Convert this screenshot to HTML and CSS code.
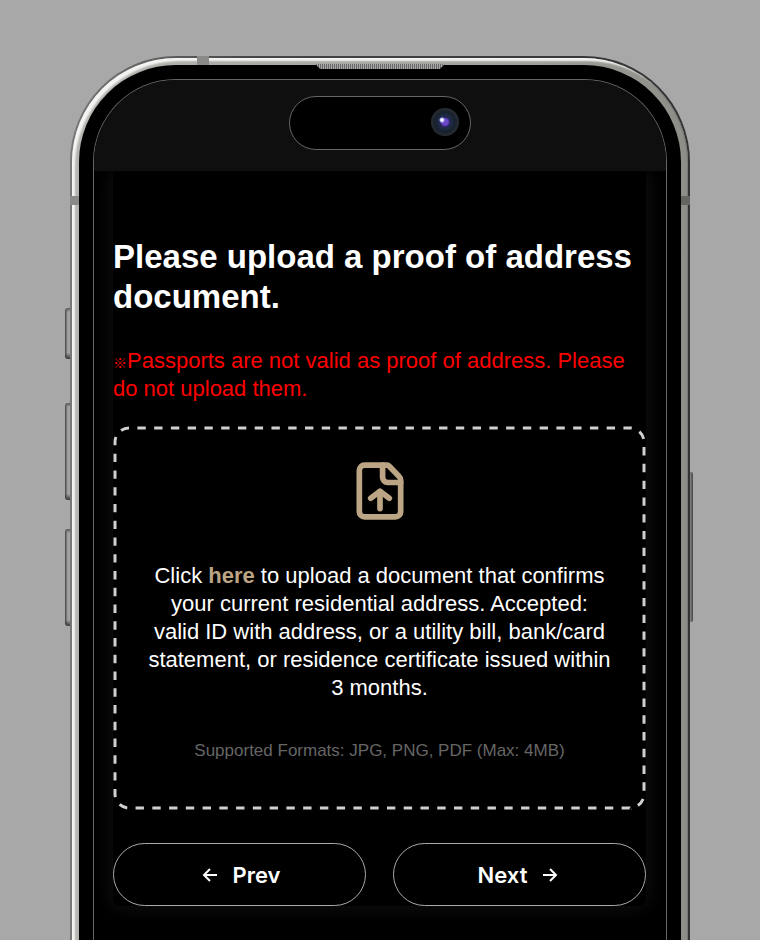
FILE: index.html
```html
<!DOCTYPE html>
<html lang="en">

<head>
    <meta charset="UTF-8">
    <meta name="viewport" content="width=device-width, initial-scale=1.0">
    <title>Upload proof of address</title>
    <link rel="stylesheet" href="styles.css">
</head>

<body>
    <div class="phone">
        <span class="side_btn action"></span>
        <span class="side_btn vol_up"></span>
        <span class="side_btn vol_down"></span>
        <span class="side_btn power"></span>
        <div class="metal">
            <span class="band band_top"></span>
            <span class="band band_left"></span>
            <span class="band band_right"></span>
            <div class="bezel">
                <span class="speaker"></span>
                <div class="screen">
                    <div class="status">
                        <div class="island">
                            <span class="camera"></span>
                        </div>
                    </div>
                    <main class="panel">
                        <h1>Please upload a proof of address document.</h1>
                        <p class="warning"><span class="mark">※</span>Passports are not valid as proof of address. Please do not upload them.</p>
                        <div class="dropzone">
                            <svg class="dashes" aria-hidden="true">
                                <rect pathLength="214" />
                            </svg>
                            <svg class="file_icon" viewBox="0 0 24 24" aria-hidden="true">
                                <path d="M6 2h8.6a1.6 1.6 0 0 1 1.1.5l3.7 3.9a2 2 0 0 1 .6 1.4V20a2 2 0 0 1-2 2H6a2 2 0 0 1-2-2V4a2 2 0 0 1 2-2z" />
                                <path d="M13 2v4.7a2 2 0 0 0 2 2h5" />
                                <path d="M12 12.2v6.6" />
                                <path d="M8.4 14.8 12 12.1l3.6 2.7" />
                            </svg>
                            <p class="info">Click <a href="#">here</a> to upload a document that confirms your current residential address. Accepted: valid ID with address, or a utility bill, bank/card statement, or residence certificate issued within 3 months.</p>
                            <p class="formats">Supported Formats: JPG, PNG, PDF (Max: 4MB)</p>
                        </div>
                        <div class="nav">
                            <button class="nav_btn" type="button">
                                <svg viewBox="0 0 18 18" aria-hidden="true"><path d="M18 9H5M11 3 5 9l6 6" /></svg>
                                Prev
                            </button>
                            <button class="nav_btn" type="button">
                                Next
                                <svg viewBox="0 0 18 18" aria-hidden="true"><path d="M0 9h13M7 3l6 6-6 6" /></svg>
                            </button>
                        </div>
                    </main>
                </div>
            </div>
        </div>
    </div>
</body>

</html>
```
FILE: styles.css
```css
* {
    margin: 0;
    padding: 0;
    box-sizing: border-box;
}

body {
    display: flex;
    min-height: 100vh;
    padding: 56px 70px 0;
    background-color: #a8a8a8;
    font-family: "Liberation Sans", Arial, "Noto Sans CJK JP", sans-serif;
    color: #fff;
}

/* phone frame */
.phone {
    position: relative;
    display: flex;
    flex: 1;
    padding: 2px 2px 0;
    border-radius: 106px 106px 0 0;
    background: linear-gradient(to right, #777, #444 30%, #333);
}

.metal {
    position: relative;
    display: flex;
    flex: 1;
    padding: 7px 7px 0;
    border-radius: 104px 104px 0 0;
    background: linear-gradient(to right, #b4b4b0, #aaaaa6 30%, #a2a29e 70%, #8e8e88);
    box-shadow: inset 4px 4px 2px -1px #f4f4f2, inset -1px 0 1px #777;
}

.bezel {
    position: relative;
    display: flex;
    flex: 1;
    padding: 14px 14px 0;
    border-radius: 97px 97px 0 0;
    background-color: #000;
}

.band {
    position: absolute;
    background-color: #8a8a88;
}

.band_top {
    top: -2px;
    left: 125px;
    width: 12px;
    height: 9px;
}

.band_left,
.band_right {
    top: 138px;
    width: 9px;
    height: 9px;
}

.band_left {
    left: -2px;
}

.band_right {
    right: -2px;
    background-color: #65655f;
}

.speaker {
    position: absolute;
    top: -1px;
    left: 50%;
    width: 130px;
    height: 5px;
    transform: translateX(-50%);
    background: repeating-linear-gradient(to right, #aaa 0 1px, #666 1px 2px);
    clip-path: polygon(0 0, 100% 0, 96% 100%, 4% 100%);
}

.side_btn {
    position: absolute;
    left: -5px;
    width: 5px;
    border-radius: 3px 0 0 3px;
    background:
        linear-gradient(to bottom, #555, transparent 4px, transparent calc(100% - 6px), #333),
        linear-gradient(to right, #444, #999 50%, #aaa);
}

.action {
    top: 252px;
    height: 51px;
}

.vol_up {
    top: 347px;
    height: 97px;
}

.vol_down {
    top: 473px;
    height: 97px;
}

.power {
    top: 416px;
    left: auto;
    right: -3px;
    width: 3px;
    height: 150px;
    border-radius: 0 2px 2px 0;
    background: linear-gradient(to right, #888, #444);
}

.screen {
    flex: 1;
    border: 1px solid #666660;
    border-bottom: none;
    border-radius: 83px 83px 0 0;
    overflow: hidden;
}

.status {
    position: relative;
    z-index: 1;
    height: 91px;
    padding-top: 16px;
    background-color: #0f0f0f;
}

.island {
    display: flex;
    justify-content: flex-end;
    align-items: center;
    width: 182px;
    height: 54px;
    margin: 0 auto;
    padding: 0 11px 2px 0;
    border: 1px solid #666;
    border-radius: 27px;
    background-color: #000;
}

.camera {
    width: 28px;
    height: 28px;
    border-radius: 50%;
    background:
        radial-gradient(circle at 11px 12px, #fff 0 1px, #aab4ff 2px, transparent 3px),
        radial-gradient(circle at 14px 14px, #6a48c8 0 3px, #26235a 5px, #1c2b40 7px, #17202c 10px, #2a2e33 14px);
}

/* page content */
.panel {
    margin: 0 20px 34px 19px;
    padding-top: 66px;
    border-radius: 0 0 8px 8px;
    background-color: #000;
    box-shadow: 0 0 20px rgba(255, 255, 255, 0.08);
}

h1 {
    font-size: 33px;
    line-height: 40px;
}

.warning {
    margin: 30px 0 23px;
    font-size: 22px;
    line-height: 28px;
    color: #f00;
}

.mark {
    font-size: 14px;
    font-weight: bold;
    line-height: 14px;
}

.dropzone {
    position: relative;
    display: flex;
    flex-direction: column;
    align-items: center;
    padding: 34px 34px 47px;
    text-align: center;
}

.dashes {
    position: absolute;
    top: 0;
    left: 0;
    width: 100%;
    height: 100%;
}

.dashes rect {
    x: 2px;
    y: 2px;
    width: calc(100% - 4px);
    height: calc(100% - 4px);
    rx: 14px;
    fill: none;
    stroke: #d0d0d0;
    stroke-width: 3;
    stroke-dasharray: 1 1;
    stroke-dashoffset: 1;
}

.file_icon {
    width: 62px;
    height: 62px;
    fill: none;
    stroke: #bba585;
    stroke-width: 2.2;
    stroke-linecap: round;
    stroke-linejoin: round;
}

.info {
    position: relative;
    margin: 40px 0 37px;
    font-size: 22px;
    line-height: 28px;
}

.info a {
    font-weight: bold;
    color: #bba585;
    text-decoration: none;
}

.formats {
    font-size: 17px;
    line-height: 24px;
    color: #666;
}

.nav {
    display: flex;
    gap: 27px;
    margin-top: 33px;
}

.nav_btn {
    display: flex;
    flex: 1;
    justify-content: center;
    align-items: center;
    gap: 16px;
    height: 63px;
    border: 1px solid #aaa;
    border-radius: 32px;
    background-color: #000;
    font-family: Inter, sans-serif;
    font-size: 22px;
    font-weight: 600;
    color: #fff;
    cursor: pointer;
}

.nav_btn svg {
    width: 18px;
    height: 18px;
    fill: none;
    stroke: #fff;
    stroke-width: 2;
}
```
